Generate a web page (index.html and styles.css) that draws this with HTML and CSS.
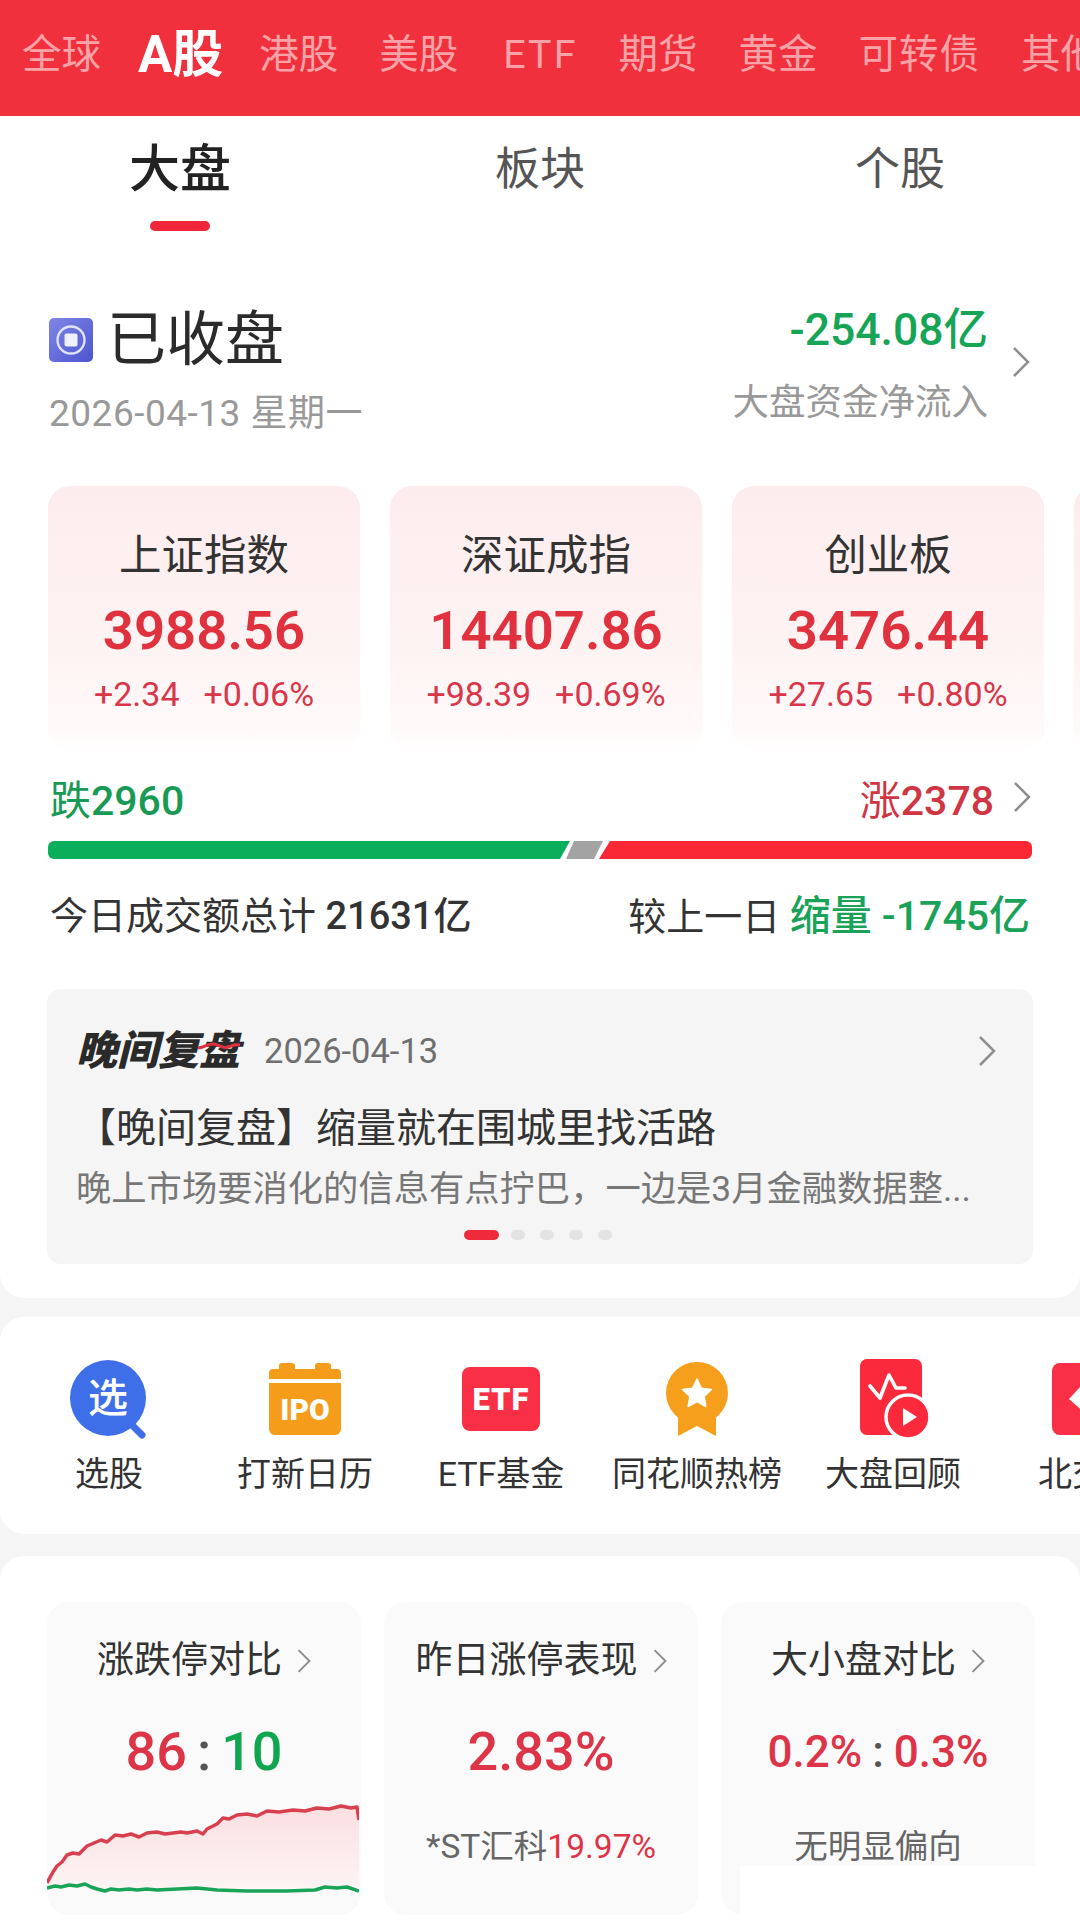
FILE: index.html
```html
<!DOCTYPE html>
<html lang="zh-CN">
<head>
<meta charset="utf-8">
<title>行情</title>
<link rel="stylesheet" href="styles.css">
</head>
<body>
<div class="page">
  <header class="market-tabs">
    <span>全球</span><span class="active">A股</span><span>港股</span><span>美股</span><span class="latin">ETF</span><span>期货</span><span>黄金</span><span class="wide">可转债</span><span>其他</span>
  </header>
  <main class="panel-main">
    <nav class="sub-tabs">
      <div class="sub-tab on"><span>大盘</span><i></i></div>
      <div class="sub-tab"><span>板块</span></div>
      <div class="sub-tab"><span>个股</span></div>
    </nav>
    <section class="status">
      <div>
        <div class="status-title">
          <svg class="status-icon" viewBox="0 0 44 44"><defs><linearGradient id="sg" x1="0" y1="0" x2="1" y2="1"><stop offset="0" stop-color="#7f86e6"/><stop offset="1" stop-color="#4c55cf"/></linearGradient></defs><rect width="44" height="44" rx="5" fill="url(#sg)"/><circle cx="22" cy="22" r="13.5" fill="none" stroke="#dfe2fa" stroke-width="2.4"/><rect x="15.5" y="15.5" width="13" height="13" rx="2" fill="#eef0fd"/></svg>
          <span>已收盘</span>
        </div>
        <div class="status-date">2026-04-13 星期一</div>
      </div>
      <div class="flow">
        <div class="flow-text">
          <div class="flow-num">-254.08亿</div>
          <div class="flow-label">大盘资金净流入</div>
        </div>
        <svg class="chev chev-lg chev-flow" viewBox="0 0 18 32"><path d="M2 2l14 14L2 30"/></svg>
      </div>
    </section>
    <section class="indices">
      <article class="index"><h3>上证指数</h3><div class="index-val">3988.56</div><div class="index-chg"><span>+2.34</span><span>+0.06%</span></div></article>
      <article class="index"><h3>深证成指</h3><div class="index-val">14407.86</div><div class="index-chg"><span>+98.39</span><span>+0.69%</span></div></article>
      <article class="index"><h3>创业板</h3><div class="index-val">3476.44</div><div class="index-chg"><span>+27.65</span><span>+0.80%</span></div></article>
      <article class="index"></article>
    </section>
    <section class="breadth">
      <span class="down">跌<b>2960</b></span>
      <span class="up-wrap"><span class="up">涨<b>2378</b></span><svg class="chev chev-lg" viewBox="0 0 18 32"><path d="M2 2l14 14L2 30"/></svg></span>
    </section>
    <svg class="bar" viewBox="0 0 984 18"><path fill="#0bae5a" d="M6 0H522L512 18H6a6 6 0 0 1-6-6V6a6 6 0 0 1 6-6z"/><path fill="#a3a3a3" d="M526 0H555L546 18H518z"/><path fill="#fa2735" d="M562 0H978a6 6 0 0 1 6 6V12a6 6 0 0 1-6 6H551z"/></svg>
    <section class="turnover">
      <span>今日成交额总计 <b>21631亿</b></span>
      <span>较上一日 <em>缩量 -1745亿</em></span>
    </section>
    <section class="review">
      <div class="review-head">
        <div class="review-left">
          <span class="review-logo">晚间复盘<svg class="review-wave" viewBox="0 0 44 10"><path d="M1 7c8-1 10-5 16-4s8 5 14 3 6-3 12-2"/></svg></span>
          <span class="review-date">2026-04-13</span>
        </div>
        <svg class="chev chev-lg" viewBox="0 0 18 32"><path d="M2 2l14 14L2 30"/></svg>
      </div>
      <div class="review-title">【晚间复盘】缩量就在围城里找活路</div>
      <div class="review-desc">晚上市场要消化的信息有点拧巴，一边是3月金融数据整...</div>
      <div class="dots"><i class="on"></i><i></i><i></i><i></i><i></i></div>
    </section>
  </main>

  <section class="panel shortcuts">
    <div class="shortcut">
      <div class="shortcut-icon"><svg width="78" height="80" viewBox="0 0 78 80"><path d="M60 64l12 12" stroke="#3f6fe8" stroke-width="7" stroke-linecap="round"/><circle cx="38" cy="39" r="38" fill="#3f6fe8"/><text class="icon-xuan" x="38" y="53" text-anchor="middle">选</text></svg></div>
      <span>选股</span>
    </div>
    <div class="shortcut">
      <div class="shortcut-icon"><svg width="72" height="72" viewBox="0 0 72 72"><path fill="#f59c1a" d="M13 0h10a3 3 0 0 1 3 3v3h20V3a3 3 0 0 1 3-3h10a3 3 0 0 1 3 3v3h6a4 4 0 0 1 4 4v6H0v-6a4 4 0 0 1 4-4h6V3a3 3 0 0 1 3-3z"/><path fill="#f59c1a" d="M0 20h72v46a6 6 0 0 1-6 6H6a6 6 0 0 1-6-6z"/><text class="icon-ipo" x="36" y="57" text-anchor="middle">IPO</text></svg></div>
      <span>打新日历</span>
    </div>
    <div class="shortcut">
      <div class="shortcut-icon"><svg width="78" height="64" viewBox="0 0 78 64"><rect width="78" height="64" rx="8" fill="#f92f45"/><text class="icon-etf" x="39" y="43" text-anchor="middle">ETF</text></svg></div>
      <span>ETF基金</span>
    </div>
    <div class="shortcut">
      <div class="shortcut-icon"><svg width="62" height="74" viewBox="0 0 62 74"><path fill="#f59f1c" d="M12 40h38v34L31 64 12 74z"/><circle cx="31" cy="31" r="31" fill="#f59f1c"/><path fill="#fff" d="M31 17l4.300 9.200 10.200 1.300-7.400 7 1.800 10L31 39.600l-8.900 4.900 1.800-10-7.400-7 10.200-1.300z" stroke="#fff" stroke-width="1.500" stroke-linejoin="round"/></svg></div>
      <span>同花顺热榜</span>
    </div>
    <div class="shortcut">
      <div class="shortcut-icon icon-review"><svg width="70" height="80" viewBox="0 0 70 80"><rect width="62" height="76" rx="7" fill="#fa2a3c"/><path d="M10 27l10 12 9-23 7 13h9" fill="none" stroke="#fff" stroke-width="3.600" stroke-linejoin="round" stroke-linecap="round"/><circle cx="48" cy="58" r="22" fill="#fa2a3c" stroke="#fff" stroke-width="3.500"/><path fill="#fff" d="M43 49l14 9-14 9z"/></svg></div>
      <span>大盘回顾</span>
    </div>
    <div class="shortcut">
      <div class="shortcut-icon"><svg width="74" height="72" viewBox="0 0 74 72"><rect width="74" height="72" rx="8" fill="#f92f45"/><path fill="#fff" d="M17 36L28 24H60L72 36 44 60z"/></svg></div>
      <span>北交所</span>
    </div>
  </section>

  <section class="panel stats">
    <article class="stat">
      <h4>涨跌停对比<svg class="chev chev-sm" viewBox="0 0 18 32"><path d="M2 2l14 14L2 30"/></svg></h4>
      <div class="stat-val"><span class="red">86</span><span class="sep">:</span><span class="green">10</span></div>
      <svg class="chart" viewBox="0 0 312 100">
        <defs><linearGradient id="cg" x1="0" y1="0" x2="0" y2="1"><stop offset="0" stop-color="#fbdfe1"/><stop offset="1" stop-color="#fdf4f4"/></linearGradient></defs>
        <path fill="url(#cg)" d="M0 81L6 70 10 64 15 60 20 53 26 51 32 52 36 48 40 44 47 41 54 38 60 40 68 33 76 34 84 32 92 35 100 31 110 30 118 32 126 31 134 30 140 31 150 29 156 32 160 27 170 22 176 16 182 17 190 13 200 12 210 14 220 9 232 10 246 8 258 9 270 6 282 7 294 4 304 6 310 5 312 18V86H0z"/>
        <path class="line-red" d="M0 81L6 70 10 64 15 60 20 53 26 51 32 52 36 48 40 44 47 41 54 38 60 40 68 33 76 34 84 32 92 35 100 31 110 30 118 32 126 31 134 30 140 31 150 29 156 32 160 27 170 22 176 16 182 17 190 13 200 12 210 14 220 9 232 10 246 8 258 9 270 6 282 7 294 4 304 6 310 5 312 18"/>
        <path class="line-green" d="M0 86L8 84 14 85 22 83 30 84 38 82 44 85 50 87 58 89 64 87 72 88 82 87 90 88 100 87 110 88 130 87 150 86 170 88 200 89 240 89 268 88 278 85 290 86 300 85 312 89"/>
      </svg>
    </article>
    <article class="stat">
      <h4>昨日涨停表现<svg class="chev chev-sm" viewBox="0 0 18 32"><path d="M2 2l14 14L2 30"/></svg></h4>
      <div class="stat-val"><span class="red">2.83%</span></div>
      <div class="stat-sub">*ST汇科<span class="red">19.97%</span></div>
    </article>
    <article class="stat">
      <h4>大小盘对比<svg class="chev chev-sm" viewBox="0 0 18 32"><path d="M2 2l14 14L2 30"/></svg></h4>
      <div class="stat-val small"><span class="red">0.2%</span><span class="sep">:</span><span class="red">0.3%</span></div>
      <div class="stat-sub">无明显偏向</div>
    </article>
    <div class="patch"></div>
  </section>
</div>
</body>
</html>
```

FILE: styles.css
```css
* { box-sizing: border-box; }
html, body { margin: 0; padding: 0; }
body {
  width: 1080px;
  height: 1923px;
  overflow: hidden;
  background: #f5f5f5;
  font-family: Roboto, "Noto Sans CJK SC", sans-serif;
  color: #333;
  text-spacing-trim: space-all;
}
.page { width: 1080px; height: 1923px; overflow: hidden; }
h3, h4 { margin: 0; font-weight: 400; }
b { font-weight: 500; }
em { font-style: normal; }

.market-tabs {
  height: 116px;
  background: #f0303c;
  display: flex;
  align-items: center;
  gap: 41px;
  padding: 0 0 6px 22px;
  color: #f9a3a8;
  font-size: 39.500px;
  line-height: 50px;
  white-space: nowrap;
  overflow: hidden;
}
.market-tabs span { flex-shrink: 0; }
.market-tabs .latin { letter-spacing: 2px; margin-left: 4px; }
.market-tabs .wide { letter-spacing: 1px; }
.market-tabs .active { color: #fff; font-size: 51px; font-weight: 700; margin: 0 -5px 0 -4px; }

.panel-main {
  background: #fff;
  border-radius: 0 0 24px 24px;
  padding-bottom: 35px;
  height: 1182px;
}
.sub-tabs { display: grid; grid-template-columns: repeat(3, 360px); padding-top: 24px; height: 115px; }
.sub-tab { display: flex; flex-direction: column; align-items: center; font-size: 45px; line-height: 60px; color: #555; }
.sub-tab.on { color: #222; font-size: 51px; font-weight: 500; }
.sub-tab i { display: block; width: 60px; height: 10px; border-radius: 5px; background: #f0263a; margin-top: 21px; }

.status { display: flex; justify-content: space-between; padding: 74px 50px 0 49px; }
.status-title { display: flex; align-items: center; gap: 14px; font-size: 59px; line-height: 70px; color: #2b2b2b; }
.status-icon { width: 44px; height: 44px; display: block; }
.status-date { margin-top: 17px; font-size: 37px; line-height: 44px; color: #999; letter-spacing: 0.5px; }
.flow { display: flex; align-items: center; gap: 24px; height: 120px; }
.flow-text { text-align: right; }
.flow-num { font-size: 44.500px; line-height: 50px; font-weight: 500; color: #16a457; }
.flow-label { margin-top: 26px; font-size: 36.500px; line-height: 44px; color: #999; }

.chev { fill: none; stroke: #8e8e8e; stroke-width: 2.5; display: block; flex-shrink: 0; }
.chev-lg { width: 18px; height: 32px; }
.chev-flow { margin-top: -6px; }
.chev-sm { width: 14px; height: 26px; margin-left: 15px; }

.indices { display: flex; gap: 30px; padding-left: 48px; margin-top: 50px; width: 1400px; }
.index {
  flex: 0 0 312px;
  height: 265px;
  border-radius: 22px;
  background: linear-gradient(180deg, #fdecee 0%, #fef3f3 60%, #fff9f9 90%, #fffefe 100%);
  padding-top: 45px;
  text-align: center;
}
.index h3 { font-size: 42.500px; line-height: 50px; color: #333; }
.index-val { margin-top: 14px; font-size: 54.500px; line-height: 70px; font-weight: 600; color: #e0313f; }
.index-chg { margin-top: 9px; font-size: 34px; line-height: 40px; color: #d9364a; display: flex; justify-content: center; gap: 24px; }

.breadth { display: flex; justify-content: space-between; align-items: center; padding: 0 19px 0 50px; margin-top: 21px; height: 50px; font-size: 41px; }
.breadth b { font-weight: 500; }
.down { color: #189a55; }
.up { color: #cf3543; }
.up-wrap { display: flex; align-items: center; gap: 19px; font-size: 41px; }
.up-wrap .chev { margin-right: 30px; }
.bar { display: block; width: 984px; height: 18px; margin: 19px 0 0 48px; }

.turnover { display: flex; justify-content: space-between; padding: 0 50px; margin-top: 28px; height: 50px; align-items: center; font-size: 38px; color: #333; }
.turnover b { font-weight: 500; }
.turnover em { color: #1aa259; font-weight: 500; font-size: 41px; }

.review {
  margin: 52px 47px 0;
  height: 275px;
  background: #f5f5f5;
  border-radius: 14px;
  padding: 37px 37px 0 29px;
}
.review-head { display: flex; justify-content: space-between; align-items: center; height: 50px; }
.review-left { display: flex; align-items: center; gap: 24px; }
.review-logo { position: relative; font-size: 41px; font-weight: 900; font-style: italic; color: #2a2a2a; line-height: 50px; }
.review-wave { position: absolute; right: -1px; top: 15px; width: 44px; height: 10px; fill: none; stroke: #e0303f; stroke-width: 3; }
.review-date { font-size: 34.500px; color: #6f6f6f; }
.review-title { margin-top: 25px; font-size: 40px; line-height: 56px; color: #333; }
.review-desc { margin-top: 10px; font-size: 35.300px; line-height: 44px; color: #777; white-space: nowrap; }
.dots { display: flex; justify-content: center; gap: 15px; margin: 19px -3px 0 0; }
.dots i { display: block; width: 14px; height: 10px; border-radius: 5px; background: #e3e3e3; }
.dots i.on { width: 35px; background: #ee2a3c; margin-right: -3px; }

.panel { background: #fff; border-radius: 24px; }
.shortcuts { margin-top: 19px; height: 217px; padding: 42px 0 0 11px; display: flex; width: 1300px; }
.shortcut { flex: 0 0 196px; display: flex; flex-direction: column; align-items: center; font-size: 34px; line-height: 44px; color: #333; white-space: nowrap; }
.shortcut-icon { height: 80px; display: flex; align-items: center; justify-content: center; margin-bottom: 13px; }
.shortcut-icon svg { display: block; }
.icon-review { padding-left: 4px; }
.icon-xuan { font-size: 40px; font-weight: 500; fill: #fff; }
.icon-ipo { font-size: 30px; font-weight: 900; fill: #fff; }
.icon-etf { font-size: 31px; font-weight: 900; fill: #fff; letter-spacing: 1px; }

.stats { position: relative; margin-top: 22px; height: 400px; padding: 46px 43px 0 47px; display: flex; gap: 23px; }
.stat { flex: 0 0 314px; height: 313px; border-radius: 22px; background: #fafafa; padding-top: 34px; text-align: center; overflow: hidden; }
.stat h4 { display: flex; justify-content: center; align-items: center; font-size: 37px; line-height: 50px; color: #333; }
.stat-val { margin-top: 36px; font-size: 54px; line-height: 60px; font-weight: 500; }
.stat-val.small { font-size: 44px; }
.red { color: #de3448; }
.green { color: #10a650; }
.sep { color: #555; margin: 0 10px; }
.chart { display: block; width: 312px; height: 100px; margin-top: 20px; }
.line-red { fill: none; stroke: #d8404f; stroke-width: 3.500; stroke-linejoin: round; }
.line-green { fill: none; stroke: #1aa457; stroke-width: 3.500; stroke-linejoin: round; }
.stat-sub { margin-top: 43px; font-size: 33.500px; line-height: 44px; color: #666; }
.patch { position: absolute; left: 740px; top: 310px; width: 340px; height: 90px; background: #fff; }
```
